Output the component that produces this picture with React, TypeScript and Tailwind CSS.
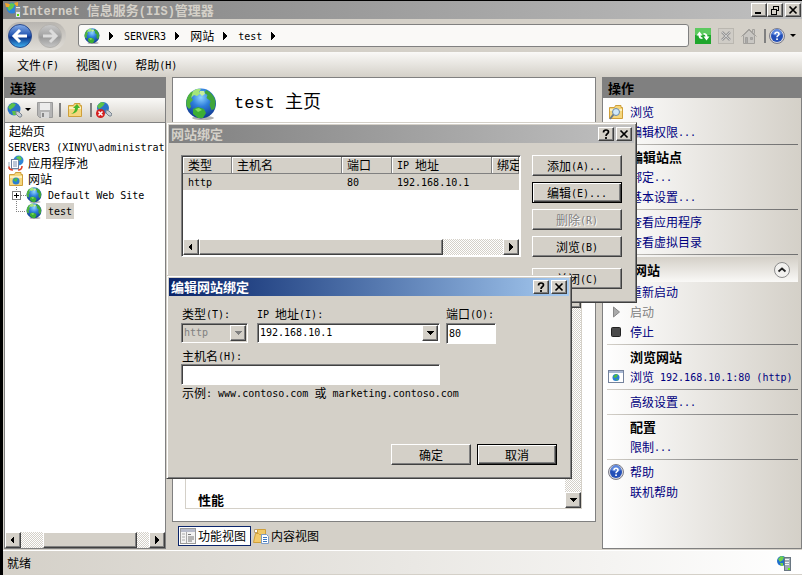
import { Fragment, type ReactNode } from 'react';
import { clsx } from 'clsx';

const raised =
  'bg-[#d4d0c8] border border-t-white border-l-white border-r-[#404040] border-b-[#404040] shadow-[inset_-1px_-1px_#808080]';
const sunken =
  'border border-t-[#808080] border-l-[#808080] border-r-white border-b-white shadow-[inset_1px_1px_#404040]';
const dither =
  'bg-[repeating-conic-gradient(#ffffff_0%_25%,#d4d0c8_0%_50%)] bg-[length:2px_2px]';
const mono = "font-['DejaVu_Sans_Mono','Noto_Sans_CJK_SC',monospace]";

// Latin runs are half as wide as the Chinese glyphs around them
function Txt({ children, size = 'text-[10px] align-[1px]', family = mono }: {
  children: string;
  size?: string;
  family?: string;
}) {
  const runs = children.split(/([\u3000-\u9fff]+)/).filter(Boolean);
  return (
    <span className="whitespace-pre">
      {runs.map((run, i) =>
        /[\u3000-\u9fff]/.test(run) ? (
          <Fragment key={i}>{run}</Fragment>
        ) : (
          <span key={i} className={clsx(family, size, 'leading-none')}>
            {run}
          </span>
        )
      )}
    </span>
  );
}

function Globe({ className = 'w-4 h-4' }: { className?: string }) {
  return (
    <svg viewBox="0 0 32 32" className={clsx('shrink-0', className)}>
      <defs>
        <radialGradient id="sea" cx="0.5" cy="0.3" r="0.75">
          <stop offset="0" stopColor="#8fd4ff" />
          <stop offset="0.4" stopColor="#2f7fdc" />
          <stop offset="1" stopColor="#0b2f86" />
        </radialGradient>
      </defs>
      <ellipse cx="18" cy="30" rx="11" ry="2" fill="#000" opacity="0.3" />
      <circle cx="16" cy="15.5" r="15" fill="url(#sea)" />
      <path d="M1.500 18C0.500 12 3 6 7 3.500L9 5 6 9l2 3-3 3 1 4-2 2z" fill="#4fb53c" />
      <path d="M8 3q4-3 8-2l-2 3 2 1-4 3-3-1-3 3z" fill="#a4e67a" />
      <path d="M21 2c5 2 9 7 9.500 12l-1 7-3 1-2-5 1-4-4-3 1-3-3-2z" fill="#3fa53a" />
      <path d="M15 3l4 0 1 3-3 2-2-2z" fill="#c8f09c" />
      <path d="M8 21l5-2 6 2 2 4-3 5-5 0-5-4z" fill="#3cae34" />
      <path d="M10 21l4-1 3 2-4 2z" fill="#7fdc5c" />
    </svg>
  );
}

function ServerIcon() {
  return (
    <svg viewBox="0 0 16 16" className="w-4 h-4 shrink-0">
      <circle cx="6" cy="6" r="5" fill="#1f6fcc" />
      <path d="M2 4l3-3 3 1-1 3-3 2zM4 8l3 0 0 3-2 0z" fill="#6fd04c" />
      <rect x="8.500" y="2.500" width="6" height="13" fill="#9eabb5" stroke="#697782" />
      <path d="M9 4.500h4M9 7.500h4M9 9.500h4" stroke="#f4f6f8" />
      <rect x="12" y="13" width="2" height="2" fill="#6f0" />
    </svg>
  );
}

function IisIcon() {
  return (
    <svg viewBox="0 0 16 16" className="w-4 h-4 shrink-0">
      <circle cx="7" cy="6" r="5.500" fill="#2a83dc" />
      <path d="M2 5l4-4 4 1-2 4-4 3z" fill="#63c94e" />
      <path d="M0 1l5 1-1 3-3 0zM9 1l4-1 0 4-2 0z" fill="#f4a62a" />
      <rect x="10.500" y="4.500" width="5" height="11" fill="#e4e8ea" stroke="#7d8a94" />
      <path d="M11 7h4M11 9h4" stroke="#555" />
      <rect x="12" y="12" width="2" height="2" fill="#5d0" />
    </svg>
  );
}

function HelpIcon() {
  return (
    <svg viewBox="0 0 16 16" className="w-4 h-4 shrink-0">
      <circle cx="8" cy="8" r="7.500" fill="#d8d8de" stroke="#7c7c88" />
      <circle cx="8" cy="8" r="6" fill="#2450b8" />
      <path d="M3 6a5 5 0 0 1 10 0q-5 3-10 0z" fill="#5d87dc" />
      <path d="M6 6.300q0-2 2-2t2 1.800q0 1-1 1.500t-1 1.700" fill="none" stroke="#fff" strokeWidth="1.600" />
      <rect x="7.200" y="10.400" width="1.700" height="1.600" fill="#fff" />
    </svg>
  );
}

function FolderIcon({ children }: { children?: ReactNode }) {
  return (
    <svg viewBox="0 0 16 16" className="w-4 h-4 shrink-0">
      <path d="M1.500 14.500v-11h5l1-2h5.500v2h1.500v11z" fill="#f5d67c" stroke="#cf9f3a" />
      <path d="M2 5h12v2H2z" fill="#fdf0bd" />
      {children}
    </svg>
  );
}

function AppPoolIcon() {
  return (
    <svg viewBox="0 0 16 16" className="w-4 h-4 shrink-0">
      <circle cx="10.500" cy="5.500" r="5" fill="#2f86d8" />
      <path d="M8 2l4-1 2 3-3 2z" fill="#62c94b" />
      <path d="M1 7v7h9" fill="none" stroke="#9aa7b8" />
      <rect x="3.500" y="4.500" width="7" height="9" fill="#fff" stroke="#6c7f9c" />
      <path d="M5 7h4M5 9h4M5 11h4" stroke="#7d8fb0" />
      <path d="M1 11.500q0 3.500 4 3.500M14 11q0 4-4 4" fill="none" stroke="#e0442c" strokeWidth="1.600" />
    </svg>
  );
}

function Triangle({ dir, color = '#000' }: { dir: 'left' | 'right' | 'down'; color?: string }) {
  const d = { left: 'M5 0v8l-4-4z', right: 'M2 0v8l4-4z', down: 'M0 2h8l-4 4z' }[dir];
  return (
    <svg viewBox="0 0 8 8" className="w-2 h-2 shrink-0" shapeRendering="crispEdges">
      <path d={d} fill={color} />
    </svg>
  );
}

function ScrollButton({ dir }: { dir: 'left' | 'right' | 'down' }) {
  return (
    <button aria-label={dir} className={clsx(raised, 'w-4 h-4 shrink-0 flex items-center justify-center')}>
      <Triangle dir={dir} />
    </button>
  );
}

type Caption = 'min' | 'restore' | 'close' | 'help';

function CaptionButton({ kind }: { kind: Caption }) {
  return (
    <button aria-label={kind} className={clsx(raised, 'w-4 h-[14px] flex items-center justify-center')}>
      <svg viewBox="0 0 10 10" className="w-[10px] h-[10px]" fill="none" stroke="#000">
        {kind === 'min' && <path d="M1 8h6" strokeWidth="2" />}
        {kind === 'restore' && (
          <path d="M3 1h6M3 1.500h6M8.500 1v5M3.500 2v2M8 5.500h-1M1 4h5M1 4.500h5.500M1.500 4v5h5V4" shapeRendering="crispEdges" />
        )}
        {kind === 'close' && <path d="M1.500 1.500l7 7M8.500 1.500l-7 7" strokeWidth="1.700" />}
        {kind === 'help' && (
          <path d="M2.500 3.500q0-2.500 2.500-2.500t2.500 2q0 1-1.200 1.800T5 7M5 8v2" strokeWidth="1.700" />
        )}
      </svg>
    </button>
  );
}

function Dialog({ title, active, className, children }: {
  title: string;
  active?: boolean;
  className: string;
  children: ReactNode;
}) {
  return (
    <section
      role="dialog"
      aria-label={title}
      className={clsx(
        'absolute p-[2px] bg-[#d4d0c8] border border-t-[#d4d0c8] border-l-[#d4d0c8] border-r-[#404040] border-b-[#404040] shadow-[inset_1px_1px_#fff,inset_-1px_-1px_#808080]',
        className
      )}
    >
      <header
        className={clsx(
          'h-[18px] pl-[2px] pr-[2px] flex items-center gap-[2px] bg-linear-to-r',
          active ? 'from-[#0a246a] to-[#a6caf0] text-white' : 'from-[#808080] to-[#c0c0c0] text-[#d4d0c8]'
        )}
      >
        <h2 className="flex-1 text-[13px] font-bold leading-[18px]">{title}</h2>
        <CaptionButton kind="help" />
        <CaptionButton kind="close" />
      </header>
      {children}
    </section>
  );
}

function PushButton({ children, focused, disabled, className }: {
  children: string;
  focused?: boolean;
  disabled?: boolean;
  className: string;
}) {
  return (
    <button
      disabled={disabled}
      className={clsx(
        'h-[21px] flex items-center justify-center leading-4',
        focused
          ? 'bg-[#d4d0c8] border border-black shadow-[inset_1px_1px_#fff,inset_-1px_-1px_#404040,inset_-2px_-2px_#808080]'
          : raised,
        disabled && 'text-[#808080] [text-shadow:1px_1px_#fff]',
        className
      )}
    >
      <Txt>{children}</Txt>
    </button>
  );
}

function TitleBar() {
  return (
    <header className="h-[18px] shrink-0 pl-[2px] pr-px flex items-center bg-linear-to-r from-[#808080] to-[#c0c0c0] text-[#d4d0c8]">
      <IisIcon />
      <h1 className="flex-1 ml-px text-[13px] font-bold leading-[18px]">
        <Txt size="text-[12px]" family="font-['Liberation_Mono',monospace]">Internet 信息服务(IIS)管理器</Txt>
      </h1>
      <CaptionButton kind="min" />
      <CaptionButton kind="restore" />
      <span className="w-[2px]" />
      <CaptionButton kind="close" />
    </header>
  );
}

function NavButtons() {
  return (
    <div className="flex w-[60px] h-7 shrink-0 rounded-full bg-linear-to-b from-[#b8b5b0] to-[#e0ddd7]">
      {['back', 'forward'].map((name) => (
        <button key={name} aria-label={name} className="w-[30px] h-7">
          <svg viewBox="0 0 30 28" className="w-[30px] h-7">
            <defs>
              <linearGradient id={`nav-${name}`} x1="0" y1="0" x2="0" y2="1">
                <stop offset="0" stopColor={name === 'back' ? '#86aeea' : '#c9c9c9'} />
                <stop offset="0.5" stopColor={name === 'back' ? '#1c4fae' : '#a3a3a3'} />
                <stop offset="0.55" stopColor={name === 'back' ? '#0b3288' : '#9a9a9a'} />
                <stop offset="1" stopColor={name === 'back' ? '#3fb4f4' : '#c6c6c6'} />
              </linearGradient>
            </defs>
            <circle cx="14" cy="14" r="11.500" fill={`url(#nav-${name})`} stroke={name === 'back' ? '#2b4a8c' : '#b4b2ae'} />
            <path
              d={name === 'back' ? 'M21 14H9M14 8L8 14l6 6' : 'M7 14h12M14 8l6 6-6 6'}
              fill="none"
              stroke={name === 'back' ? '#fff' : '#dcdcdc'}
              strokeWidth="3"
            />
          </svg>
        </button>
      ))}
    </div>
  );
}

function AddressBar() {
  const crumbs = ['SERVER3', '网站', 'test'];
  return (
    <div className="h-[33px] shrink-0 pl-[3px] pr-[6px] flex items-center">
      <NavButtons />
      <nav className="flex-1 h-[23px] ml-3 pl-[5px] flex items-center border border-[#808080] rounded-[3px] bg-[#faf9f7]">
        <Globe />
        {crumbs.map((crumb) => (
          <Fragment key={crumb}>
            <span className="ml-[7px] mr-[9px] flex"><Triangle dir="right" /></span>
            <a href="#" className="leading-4"><Txt>{crumb}</Txt></a>
          </Fragment>
        ))}
        <span className="ml-[7px] flex"><Triangle dir="right" /></span>
      </nav>
      <div className="ml-[6px] flex items-center gap-[7px]">
        <button aria-label="刷新">
          <svg viewBox="0 0 16 16" className="w-4 h-4">
            <rect width="16" height="16" fill="#1fa62c" />
            <rect width="16" height="7" fill="#5cc95f" />
            <path d="M1.500 7.500l3-4 3 4H5.500q0 2 2 2v1.500Q3.500 11 3.500 7.500zM14.500 8.500l-3 4-3-4h2q0-2-2-2V5q4 0 4 3.500z" fill="#fff" />
          </svg>
        </button>
        <button aria-label="停止">
          <svg viewBox="0 0 16 16" className="w-4 h-4">
            <rect x="0.500" y="0.500" width="15" height="15" fill="#cfccc6" stroke="#bab7b0" />
            <path d="M4 4l8 8M12 4l-8 8" stroke="#999" strokeWidth="2.500" />
            <path d="M4 4l8 8M12 4l-8 8" stroke="#ccc" />
          </svg>
        </button>
        <button aria-label="主页">
          <svg viewBox="0 0 16 16" className="w-4 h-4" fill="#c9c7c3" stroke="#a3a19d">
            <path d="M11.500 1.500h2v4h-2z" />
            <path d="M2.500 7.500v8h11v-8L8 2z" />
            <path d="M0.500 8.500L8 1l7.500 7.500" fill="none" />
            <path d="M4.500 9.500h2v6h-2zM9.500 9.500h2v2h-2z" fill="#aaa" />
          </svg>
        </button>
      </div>
      <span className="w-[2px] h-[14px] ml-[7px] mr-[3px] bg-[#808080]" />
      <button aria-label="帮助" className="flex items-center gap-[5px]">
        <HelpIcon />
        <svg viewBox="0 0 6 4" className="w-[6px] h-1"><path d="M0 0h6l-3 3z" /></svg>
      </button>
    </div>
  );
}

function MenuBar() {
  return (
    <nav className="h-[25px] shrink-0 pl-[14px] flex items-center gap-[17px] bg-linear-to-b from-[#faf9f7] to-[#d4d0c8]">
      {['文件(F)', '视图(V)', '帮助(H)'].map((item) => (
        <button key={item} className="leading-4"><Txt>{item}</Txt></button>
      ))}
    </nav>
  );
}

function PanelHeader({ children }: { children: string }) {
  return (
    <h2 className="h-5 shrink-0 pl-[5px] bg-[#808080] text-[13px] font-bold leading-5">{children}</h2>
  );
}

function Connections() {
  return (
    <aside className="w-[162px] shrink-0 flex flex-col border border-[#808080] bg-white overflow-hidden">
      <PanelHeader>连接</PanelHeader>
      <div className="h-[25px] shrink-0 pl-[2px] flex items-center border-b border-[#808080] bg-linear-to-b from-[#faf9f7] to-[#d4d0c8]">
        <button aria-label="连接" className="flex items-center gap-[2px]">
          <svg viewBox="0 0 16 16" className="w-4 h-4">
            <circle cx="7" cy="7" r="6.500" fill="#2a74c8" />
            <path d="M1 5l4-4 4 1-2 3-4 3zM5 9l4 0 0 4-3 0z" fill="#5cc24a" />
            <path d="M9 9l3 1 3 3-1 2-2 0-3-3z" fill="#c9ced4" stroke="#7a8590" />
          </svg>
          <svg viewBox="0 0 6 4" className="w-[6px] h-1"><path d="M0 0h6l-3 3z" /></svg>
        </button>
        <button aria-label="保存" className="ml-[6px]">
          <svg viewBox="0 0 16 16" className="w-4 h-4">
            <path d="M0.500 0.500h15v15H2.500l-2-2z" fill="#b4b4b4" stroke="#9a9a9a" />
            <path d="M3 1h10v7H3z" fill="#ececec" />
            <path d="M4 10h8v6H4z" fill="#dadada" />
            <path d="M5 11h2v4H5z" fill="#888" />
          </svg>
        </button>
        <span className="w-[2px] h-[14px] mx-[6px] bg-[#808080]" />
        <button aria-label="向上">
          <FolderIcon>
            <path d="M4 12q4-2 4-6H6l4-4 3 4h-2q0 5-7 6z" fill="#46b52c" />
          </FolderIcon>
        </button>
        <span className="w-[2px] h-[14px] ml-[7px] mr-1 bg-[#808080]" />
        <button aria-label="删除连接">
          <svg viewBox="0 0 16 16" className="w-4 h-4">
            <circle cx="7" cy="6" r="6" fill="#2a74c8" />
            <path d="M1 4l4-4 4 1-2 3-4 3z" fill="#5cc24a" />
            <path d="M10 8l3 1 3 3-1 2-2 0-3-3z" fill="#c9ced4" stroke="#7a8590" />
            <circle cx="4.500" cy="11.500" r="4.500" fill="#d42020" />
            <path d="M2.500 9.500l4 4M6.500 9.500l-4 4" stroke="#fff" strokeWidth="1.500" />
          </svg>
        </button>
      </div>
      <ul className="flex-1 leading-4 whitespace-nowrap">
        <li className="pl-1 h-4">起始页</li>
        <li className="pl-[3px] h-4"><Txt>SERVER3 (XINYU\administrat</Txt></li>
        <li className="pl-[3px] h-4 flex gap-1">
          <AppPoolIcon />
          应用程序池
        </li>
        <li className="pl-[3px] h-4 flex gap-1">
          <FolderIcon>
            <circle cx="8" cy="10" r="3.500" fill="#2a7fd4" />
            <path d="M5 9l3-2 2 1-2 3z" fill="#4fbe3c" />
          </FolderIcon>
          网站
        </li>
        <li className="pl-[7px] h-4 flex items-center">
          <svg viewBox="0 0 14 16" className="w-[14px] h-4" shapeRendering="crispEdges" fill="none">
            <path d="M4.500 0v4M4.500 12v4M9 8.500h5" stroke="#808080" strokeDasharray="1 1" />
            <rect x="0.500" y="4.500" width="8" height="8" fill="#fff" stroke="#808080" />
            <path d="M2 8.500h5M4.500 6v5" stroke="#000" />
          </svg>
          <Globe />
          <span className="ml-[6px]"><Txt>Default Web Site</Txt></span>
        </li>
        <li className="pl-[7px] h-4 flex items-center">
          <svg viewBox="0 0 14 16" className="w-[14px] h-4" shapeRendering="crispEdges" fill="none">
            <path d="M4.500 0v8M4 8.500h10" stroke="#808080" strokeDasharray="1 1" />
          </svg>
          <Globe />
          <span className="h-4 ml-1 px-[2px] bg-[#d4d0c8]"><Txt>test</Txt></span>
        </li>
      </ul>
      <div className={clsx('h-4 shrink-0 flex', dither)}>
        <ScrollButton dir="left" />
        <span className="w-[22px]" />
        <span className={clsx(raised, 'flex-1')} />
        <span className="w-3" />
        <ScrollButton dir="right" />
      </div>
    </aside>
  );
}

function Workspace() {
  return (
    <main className="flex-1 flex flex-col">
      <div className="flex-1 min-h-0 px-3 pt-[10px] pb-3 flex flex-col border border-[#808080] bg-white">
        <div className="h-9 shrink-0 flex items-start gap-[17px]">
          <Globe className="w-8 h-8" />
          <h2 className="text-[18px] leading-6">
            <Txt size="text-[17px]" family="font-['Liberation_Mono',monospace]">test 主页</Txt>
          </h2>
        </div>
        <div className="flex-1 min-h-0 mt-3 mr-px flex border border-[#d4d0c8]">
          <div className="flex-1 pl-3 flex flex-col justify-end">
            <h3 className="text-[13px] font-bold leading-4">性能</h3>
          </div>
          <div className={clsx('w-4 flex flex-col', dither)}>
            <span className={clsx(raised, 'h-[171px]')} />
            <span className="flex-1" />
            <ScrollButton dir="down" />
          </div>
        </div>
      </div>
      <div className="h-[27px] shrink-0 pl-[6px] flex items-center gap-[2px] leading-4">
        <button className="h-5 px-px pr-1 flex items-center gap-[2px] border border-[#0a246a] bg-white">
          <svg viewBox="0 0 16 16" className="w-4 h-4">
            <rect x="0.500" y="0.500" width="15" height="15" fill="#f3f3f3" stroke="#9a9a9a" />
            <path d="M1 1h14v3H1z" fill="#b8bccb" />
            <path d="M6.500 4v11M2 6h3M2 9h3M2 12h3" stroke="#aaa" />
            <path d="M8 6.500h3M8 9h6M8 11h6M8 13h4" stroke="#777" />
          </svg>
          功能视图
        </button>
        <button className="flex items-center gap-[2px]">
          <svg viewBox="0 0 16 16" className="w-4 h-4">
            <path d="M1.500 1.500h5v3h-5z" fill="#fff" stroke="#bba070" />
            <path d="M4.500 1.500h8v6h-8z" fill="#f0c868" stroke="#cf9f3a" />
            <path d="M0.500 14.500l2-9h3l1 1h5l-2 8z" fill="#f2ca6a" stroke="#cf9f3a" />
            <path d="M8.500 6.500h5l2 2v7h-7z" fill="#fff" stroke="#7b9cc8" />
            <path d="M10 9.500h4M10 11.500h4M10 13.500h4" stroke="#3f78c0" />
          </svg>
          内容视图
        </button>
      </div>
    </main>
  );
}

function ActionRow({ icon, children, bold, muted }: {
  icon?: ReactNode;
  children: string;
  bold?: boolean;
  muted?: boolean;
}) {
  return (
    <div className="h-5 pl-[5px] flex items-center whitespace-nowrap leading-5">
      <span className="w-[22px] shrink-0 flex">{icon}</span>
      {bold ? (
        <h3 className="text-[13px] font-bold">{children}</h3>
      ) : muted ? (
        <span className="text-[#808080]">{children}</span>
      ) : (
        <a href="#" className="text-[#000080]"><Txt>{children}</Txt></a>
      )}
    </div>
  );
}

function Separator() {
  return <hr className="h-px my-[2px] ml-1 mr-[3px] border-0 bg-linear-to-r from-[#d4d0c8] via-[#8c8c8c] to-[#707070]" />;
}

function Actions() {
  return (
    <aside className="w-[200px] shrink-0 flex flex-col border border-[#808080] bg-linear-to-r from-white to-[#d4d0c8]">
      <PanelHeader>操作</PanelHeader>
      <div className="pt-1">
        <ActionRow
          icon={
            <FolderIcon>
              <circle cx="8" cy="8" r="3.500" fill="#cfe8fa" stroke="#6b8aa8" />
              <path d="M5.500 10.500L2 15" stroke="#6b7a88" strokeWidth="2" />
            </FolderIcon>
          }
        >
          浏览
        </ActionRow>
        <ActionRow>编辑权限...</ActionRow>
        <Separator />
        <ActionRow bold>编辑站点</ActionRow>
        <ActionRow>绑定...</ActionRow>
        <ActionRow>基本设置...</ActionRow>
        <Separator />
        <ActionRow>查看应用程序</ActionRow>
        <ActionRow>查看虚拟目录</ActionRow>
        <Separator />
        <div className="h-[25px] pl-[27px] pr-2 ml-1 mr-[3px] flex items-center justify-between bg-linear-to-b from-[#d4d0c8] to-[#faf9f7]">
          <h3 className="text-[13px] font-bold leading-5">网站</h3>
          <button aria-label="折叠">
            <svg viewBox="0 0 16 16" className="w-4 h-4">
              <circle cx="8" cy="8" r="7.500" fill="#f2f1ef" stroke="#8c8c8c" />
              <path d="M4.500 9.500L8 6.500l3.500 3" fill="none" stroke="#222" strokeWidth="1.800" />
            </svg>
          </button>
        </div>
        <ActionRow>重新启动</ActionRow>
        <ActionRow
          muted
          icon={
            <svg viewBox="0 0 16 16" className="w-4 h-4">
              <path d="M5.500 3v10l6-5z" fill="#aaa" stroke="#888" />
            </svg>
          }
        >
          启动
        </ActionRow>
        <ActionRow
          icon={
            <svg viewBox="0 0 16 16" className="w-4 h-4">
              <rect x="3.500" y="3.500" width="9" height="9" rx="1" fill="#4a4a4a" stroke="#222" />
            </svg>
          }
        >
          停止
        </ActionRow>
        <Separator />
        <ActionRow bold>浏览网站</ActionRow>
        <ActionRow
          icon={
            <svg viewBox="0 0 16 14" className="w-4 h-[14px]">
              <rect x="0.500" y="0.500" width="15" height="12" fill="#fff" stroke="#75839c" />
              <path d="M1 1h14v2H1z" fill="#a9b8d4" />
              <circle cx="8" cy="7.500" r="3.500" fill="#2a7fd4" />
              <path d="M5 7l3-3 2 1-2 3zM8 9l2 0-1 2z" fill="#4fbe3c" />
            </svg>
          }
        >
          浏览 192.168.10.1:80 (http)
        </ActionRow>
        <Separator />
        <ActionRow>高级设置...</ActionRow>
        <Separator />
        <ActionRow bold>配置</ActionRow>
        <ActionRow>限制...</ActionRow>
        <Separator />
        <ActionRow icon={<HelpIcon />}>帮助</ActionRow>
        <ActionRow>联机帮助</ActionRow>
      </div>
    </aside>
  );
}

function BindingsDialog() {
  const head = 'h-[17px] p-0 pl-[5px] text-left font-normal leading-4 border-r border-b border-[#808080] shadow-[inset_1px_1px_#fff]';
  const cell = 'h-4 p-0 pl-[5px]';
  return (
    <Dialog title="网站绑定" className="left-[166px] top-[122px] w-[471px]">
      <div className="pt-3 pb-[11px] px-3 flex justify-between items-start">
        <div className={clsx(sunken, 'w-[340px] h-[102px] p-px flex flex-col bg-white overflow-hidden')}>
          <div className="flex-1 overflow-hidden">
            <table className="w-full table-fixed border-separate border-spacing-0 leading-4 whitespace-nowrap">
              <thead className="bg-[#d4d0c8]">
                <tr>
                  <th className={clsx(head, 'w-[49px]')}>类型</th>
                  <th className={clsx(head, 'w-[110px]')}>主机名</th>
                  <th className={clsx(head, 'w-[50px]')}>端口</th>
                  <th className={clsx(head, 'w-[100px]')}><Txt>IP 地址</Txt></th>
                  <th className={head}>绑定</th>
                </tr>
              </thead>
              <tbody className="bg-[#d4d0c8]">
                <tr>
                  <td className={cell}><Txt>http</Txt></td>
                  <td className={cell} />
                  <td className={cell}><Txt>80</Txt></td>
                  <td className={cell}><Txt>192.168.10.1</Txt></td>
                  <td className={cell} />
                </tr>
              </tbody>
            </table>
          </div>
          <div className={clsx('h-4 shrink-0 flex', dither)}>
            <ScrollButton dir="left" />
            <span className={clsx(raised, 'w-[244px]')} />
            <span className="flex-1" />
            <ScrollButton dir="right" />
          </div>
        </div>
        <div className="w-[90px] flex flex-col gap-[6px]">
          <PushButton className="w-full">添加(A)...</PushButton>
          <PushButton focused className="w-full">编辑(E)...</PushButton>
          <PushButton disabled className="w-full">删除(R)</PushButton>
          <PushButton className="w-full">浏览(B)</PushButton>
          <PushButton className="w-full mt-[5px]">关闭(C)</PushButton>
        </div>
      </div>
    </Dialog>
  );
}

function Select({ id, value, disabled }: { id: string; value: string; disabled?: boolean }) {
  return (
    <div className={clsx(sunken, 'relative h-5', disabled ? 'bg-[#d4d0c8]' : 'bg-white')}>
      <select
        id={id}
        disabled={disabled}
        className={clsx(
          mono,
          'block appearance-none w-full h-full pl-[2px] text-[10px] bg-transparent opacity-100 outline-none',
          disabled && 'text-[#808080]'
        )}
      >
        <option>{value}</option>
      </select>
      <span className={clsx(raised, 'absolute right-px top-px w-4 h-4 flex items-center justify-center pointer-events-none')}>
        <Triangle dir="down" color={disabled ? '#808080' : '#000'} />
      </span>
    </div>
  );
}

function EditBindingDialog() {
  const input = clsx(sunken, mono, 'h-[21px] px-[2px] text-[10px] bg-white outline-none');
  return (
    <Dialog active title="编辑网站绑定" className="left-[166px] top-[275px] w-[406px]">
      <form className="pt-[10px] px-3 pb-[11px] leading-4">
        <div className="flex">
          <div className="w-[67px]">
            <label htmlFor="type" className="block h-[17px] pl-px"><Txt>类型(T):</Txt></label>
            <Select id="type" value="http" disabled />
          </div>
          <div className="w-[183px] ml-[9px]">
            <label htmlFor="ip" className="block h-[17px]"><Txt>IP 地址(I):</Txt></label>
            <Select id="ip" value="192.168.10.1" />
          </div>
          <div className="w-[50px] ml-[6px]">
            <label htmlFor="port" className="block h-[17px]"><Txt>端口(O):</Txt></label>
            <input id="port" defaultValue="80" className={clsx(input, 'block w-full')} />
          </div>
        </div>
        <label htmlFor="host" className="block h-4 mt-1 pl-px"><Txt>主机名(H):</Txt></label>
        <input id="host" className={clsx(input, 'block w-[259px]')} />
        <p className="pl-px"><Txt>示例: www.contoso.com 或 marketing.contoso.com</Txt></p>
        <div className="mt-[43px] flex justify-end gap-[6px]">
          <PushButton className="w-20">确定</PushButton>
          <PushButton focused className="w-20">取消</PushButton>
        </div>
      </form>
    </Dialog>
  );
}

export default function App() {
  return (
    <div className="relative h-screen pl-[3px] pt-px flex flex-col overflow-hidden bg-black text-[12px] text-black font-['Noto_Sans_CJK_SC',sans-serif]">
      <div className="flex-1 min-h-0 flex flex-col bg-[#d4d0c8]">
        <TitleBar />
        <AddressBar />
        <MenuBar />
        <div className="flex-1 min-h-0 pl-px flex gap-[6px]">
          <Connections />
          <Workspace />
          <Actions />
        </div>
        <footer className="h-6 mt-px mb-px shrink-0 pl-1 pr-[10px] flex items-center justify-between border-t border-white bg-linear-to-r from-[#d4d0c8] to-white leading-4">
          <span>就绪</span>
          <ServerIcon />
        </footer>
      </div>
      <BindingsDialog />
      <EditBindingDialog />
    </div>
  );
}
